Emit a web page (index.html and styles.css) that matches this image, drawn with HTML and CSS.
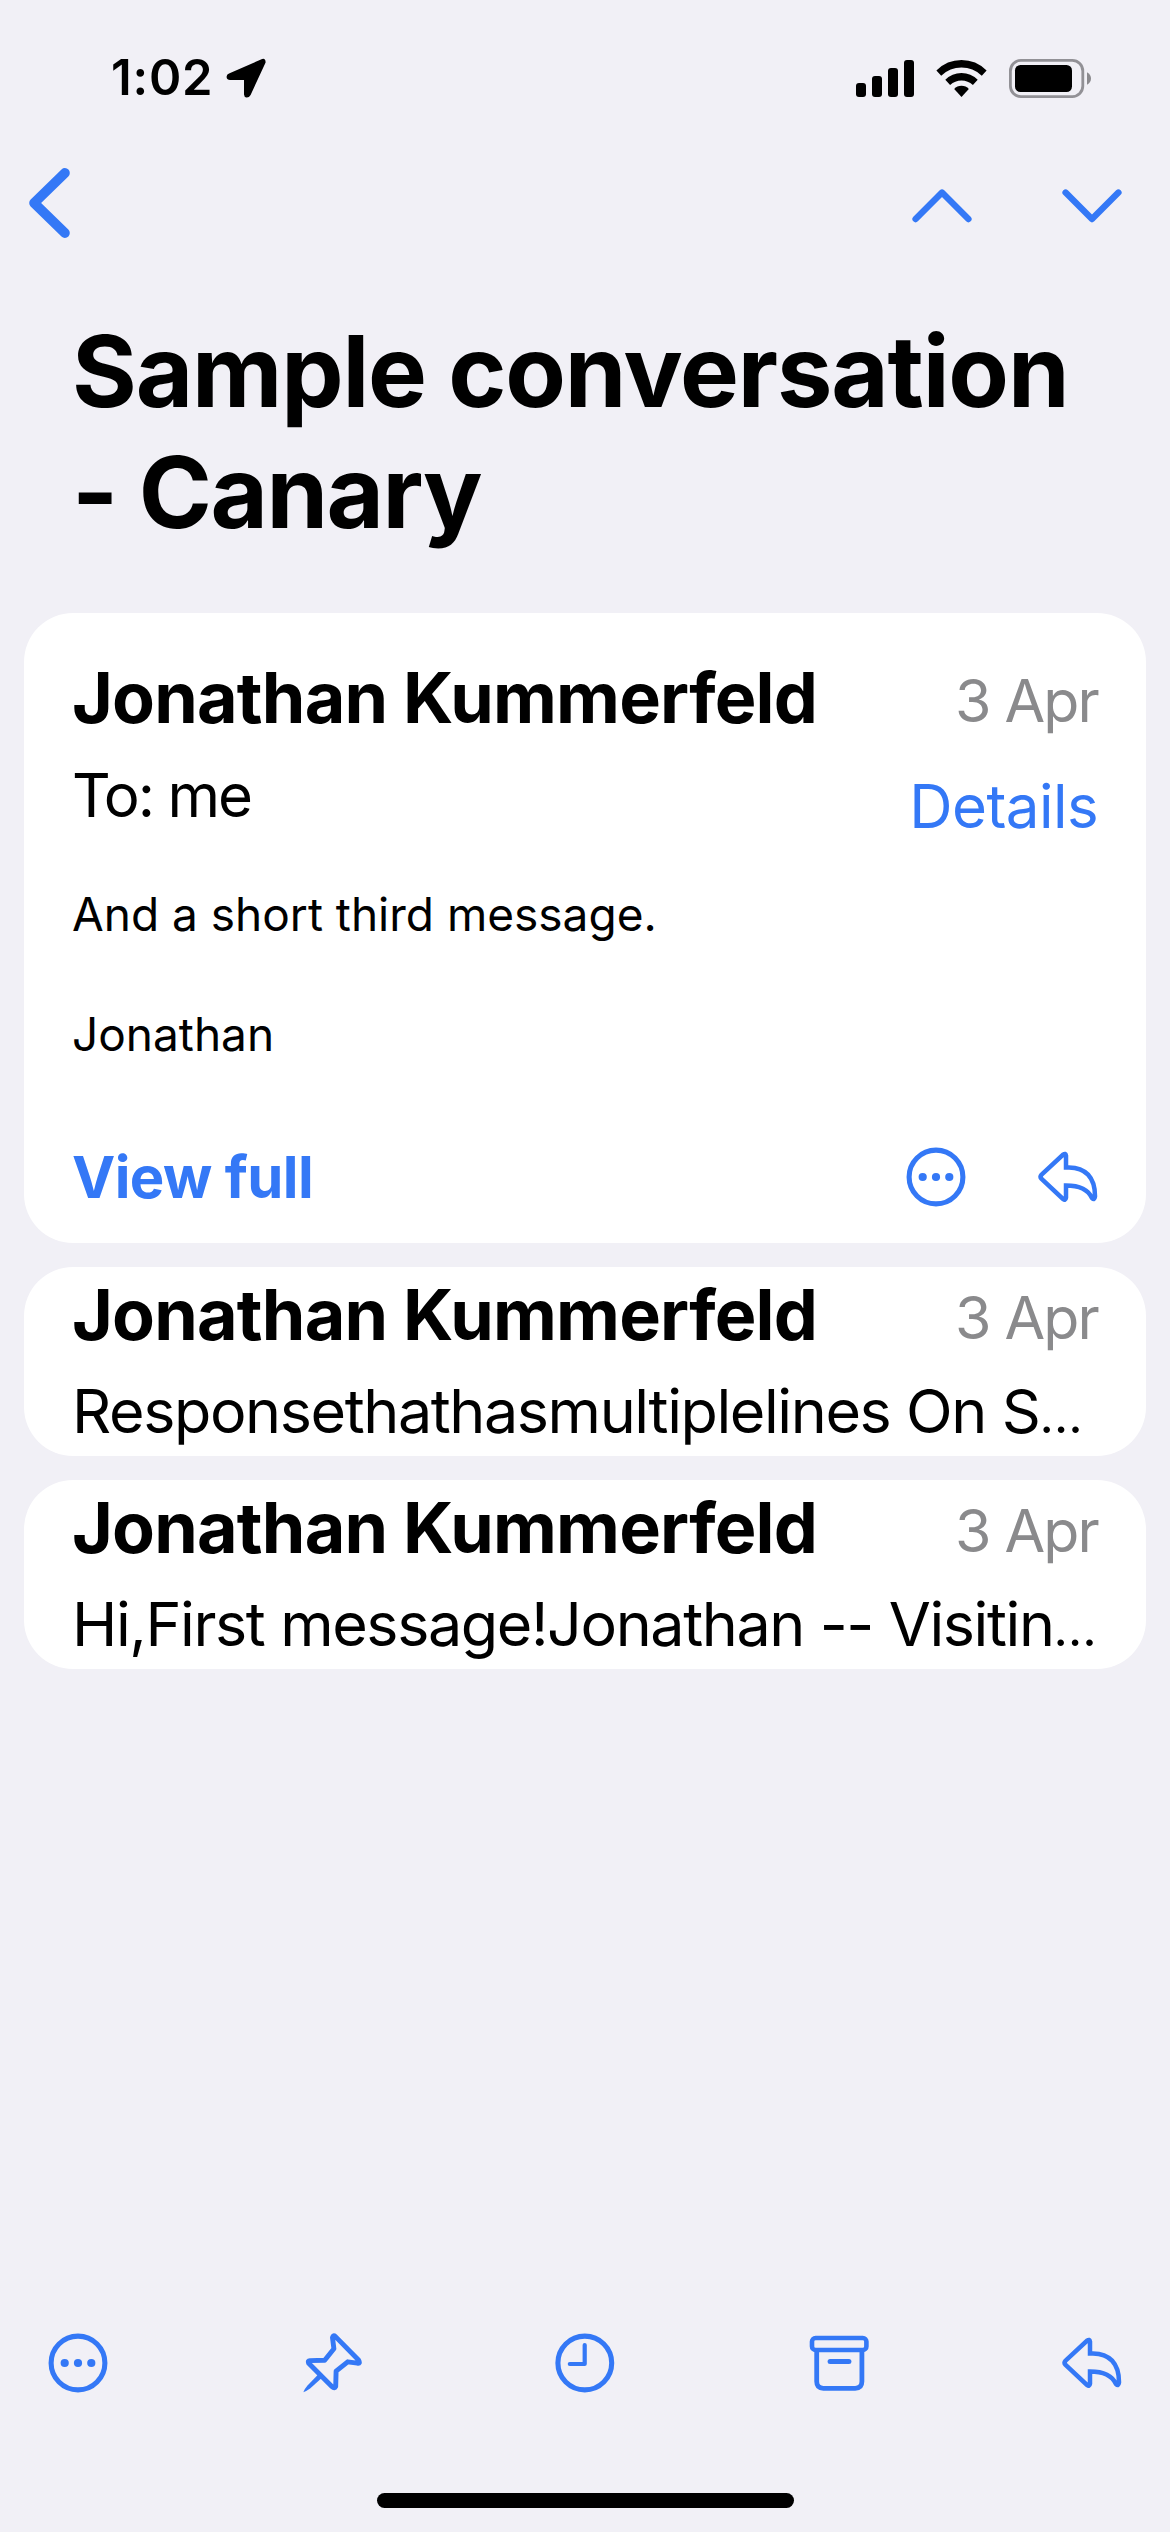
FILE: index.html
```html
<!DOCTYPE html>
<html lang="en">
<head>
<meta charset="utf-8">
<title>Sample conversation - Canary</title>
<link rel="stylesheet" href="styles.css">
</head>
<body>
<svg width="0" height="0" class="sprite" aria-hidden="true">
  <symbol id="more" viewBox="0 0 60 60">
    <circle cx="30" cy="30" r="26.9" fill="none" stroke="currentColor" stroke-width="5.1"/>
    <circle cx="16.7" cy="30" r="4.1" fill="currentColor"/>
    <circle cx="30" cy="30" r="4.1" fill="currentColor"/>
    <circle cx="43.3" cy="30" r="4.1" fill="currentColor"/>
  </symbol>
  <symbol id="reply" viewBox="0 0 60 60">
    <path d="M3.6 27.6 L25.2 7.6 Q27.6 5.8 28 8.6 V20.4 H31 C47 20.4 57.2 30 57 49.6 Q56.6 53.4 54 51 C50 42 42 38.4 28 38.4 V50.8 Q27.6 54 25 52 L3.6 32 Q1.5 29.8 3.6 27.6 Z" fill="none" stroke="currentColor" stroke-width="4.5"/>
  </symbol>
</svg>
<div class="screen">
  <header class="status">
    <div class="clock">
      <span>1:02</span>
      <svg width="40" height="40" viewBox="0 0 40 40"><path d="M35.5 1.2 Q39.6 -0.2 39.6 4.4 L24.6 37 Q23 39.8 20.6 39.6 Q18.2 39.2 18 36.4 V22 H4 Q1 21.8 .6 19.2 Q.4 16.8 3 15.6 Z"/></svg>
    </div>
    <div class="indicators">
      <svg width="58" height="37" viewBox="0 0 58 37"><rect y="23" width="10" height="14" rx="3"/><rect x="16" y="16" width="10" height="21" rx="3"/><rect x="32" y="8" width="10" height="29" rx="3"/><rect x="48" width="10" height="37" rx="3"/></svg>
      <svg width="51" height="37" viewBox="0 0 51 37"><path d="M.4 10.4 Q11 0 25.5 0 Q40 0 50.6 10.4 L45.8 15.7 Q37 7.6 25.5 7.6 Q14 7.6 5.2 15.7 Z"/><path d="M9.3 19.8 Q16 13 25.5 13 Q35 13 41.7 19.8 L36.9 24.9 Q32 20.4 25.5 20.4 Q19 20.4 14.1 24.9 Z"/><path d="M18.2 29 Q21 25.8 25.5 25.8 Q30 25.8 32.8 29 L25.5 37 Z"/></svg>
      <svg width="82" height="39" viewBox="0 0 82 39"><rect x="1.4" y="1.4" width="72.4" height="36.2" rx="10.5" fill="none" stroke="#929196" stroke-width="2.8"/><rect x="6" y="6" width="57" height="27" rx="5.5"/><path d="M78 13.2 Q82 15.5 82 19.5 Q82 23.5 78 25.8 Z" fill="#8b8a8e"/></svg>
    </div>
  </header>

  <nav class="nav">
    <svg width="41" height="70" viewBox="0 0 41 70"><path d="M35.9 4.9 L5.1 35 L35.9 65.1" class="back"/></svg>
    <div class="pager">
      <svg width="60" height="34" viewBox="0 0 60 34"><path d="M3.6 30 L30 3.6 L56.4 30" class="step"/></svg>
      <svg width="60" height="34" viewBox="0 0 60 34"><path d="M3.6 3.6 L30 30 L56.4 3.6" class="step"/></svg>
    </div>
  </nav>

  <h1 class="subject">Sample conversation <span class="tail">- Canary</span></h1>

  <main class="thread">
    <article class="card open">
      <div class="head"><h2>Jonathan Kummerfeld</h2><time>3 Apr</time></div>
      <div class="recipients"><span class="to">To: me</span><a class="details">Details</a></div>
      <div class="body"><p>And a short third message.</p><p>Jonathan</p></div>
      <div class="actions">
        <a class="full">View full</a>
        <svg class="icon"><use href="#more"/></svg>
        <svg class="icon"><use href="#reply"/></svg>
      </div>
    </article>
    <article class="card folded">
      <div class="head"><h2>Jonathan Kummerfeld</h2><time>3 Apr</time></div>
      <p class="preview">Responsethathasmultiplelines On S<span class="dots">…</span></p>
    </article>
    <article class="card folded">
      <div class="head"><h2>Jonathan Kummerfeld</h2><time>3 Apr</time></div>
      <p class="preview">Hi,First message!Jonathan -- Visitin<span class="dots">…</span></p>
    </article>
  </main>

  <footer class="toolbar">
    <svg class="icon"><use href="#more"/></svg>
    <svg class="icon" viewBox="0 0 60 60"><g transform="translate(.5 0)"><path d="M33 3.6 L56 27 Q58.2 31 54.8 30.2 L45.2 28.8 L33.6 38.2 L33.2 53.4 Q32 56 29.6 53.8 L6.2 30.2 Q5 27.4 7.6 27.6 L22.2 27.2 L31.4 15.8 L30 4.6 Q30.6 1.6 33 3.6 Z" fill="none" stroke="currentColor" stroke-width="4.9" stroke-linejoin="round"/><path d="M16.4 40.8 L5 52.4 Q1.6 56.4 .8 59.2 Q3.8 58.4 7.6 55.6 L19.8 44.4 Z" fill="currentColor"/></g></svg>
    <svg class="icon" viewBox="0 0 60 60"><circle cx="29.8" cy="30" r="26.9" fill="none" stroke="currentColor" stroke-width="5.1"/><path d="M29.7 12 V31 H14.8" fill="none" stroke="currentColor" stroke-width="4.2" stroke-linecap="round" stroke-linejoin="round"/></svg>
    <svg class="icon" viewBox="0 0 60 60"><g fill="none" stroke="currentColor"><rect x="3" y="5" width="54.4" height="12" rx="3.6" stroke-width="4.6"/><path d="M7.7 18 V48.6 Q7.7 55.3 14.4 55.3 H46.2 Q52.9 55.3 52.9 48.6 V18" stroke-width="4.8"/><path d="M21.1 28.5 H39.9" stroke-width="5" stroke-linecap="round"/></g></svg>
    <svg class="icon"><use href="#reply"/></svg>
  </footer>
  <div class="home"></div>
</div>
</body>
</html>
```
FILE: styles.css
```css
* { box-sizing: border-box; margin: 0; padding: 0; }
html, body { background: #f1f0f6; }
body { font-family: Inter, "Liberation Sans", sans-serif; color: #000; }
svg { display: block; flex: none; }
.sprite { position: absolute; }

.screen { width: 1170px; height: 2532px; display: flex; flex-direction: column; overflow: hidden; }

.status { height: 156px; padding: 0 79px 0 111px; display: flex; align-items: center; justify-content: space-between; }
.clock { display: flex; align-items: center; gap: 13px; font-size: 49px; font-weight: 600; line-height: 60px; letter-spacing: .78px; }
.indicators { display: flex; align-items: center; gap: 22px; }

.nav { height: 94px; padding: 0 48px 0 29px; display: flex; align-items: center; justify-content: space-between; }
.pager { display: flex; gap: 90px; padding-top: 6px; }
.back, .step { fill: none; stroke: #3478f6; stroke-linecap: round; stroke-linejoin: round; }
.back { stroke-width: 9.8px; }
.step { stroke-width: 6.4px; }

.subject { height: 302.5px; margin: 60.5px 72px 0; font-size: 99px; font-weight: 700; line-height: 121px; letter-spacing: -1.16px; }
.tail { letter-spacing: -1.5px; white-space: nowrap; }

.thread { flex: 1; padding: 0 24px; display: flex; flex-direction: column; gap: 24px; }
.card { background: #fff; border-radius: 49px; padding: 0 48px; }
.open { height: 630px; padding-top: 42px; }
.folded { height: 189px; padding-top: 5px; }

.head { height: 85px; display: flex; justify-content: space-between; align-items: baseline; line-height: 85px; }
h2 { font-size: 70px; font-weight: 700; letter-spacing: -.8px; }
time { font-size: 59px; letter-spacing: -1.84px; color: #8a8a8c; transform: translateY(-1px); }

.recipients { height: 83px; margin-top: 19px; display: flex; justify-content: space-between; font-size: 60px; line-height: 72px; }
.to { letter-spacing: -2.17px; }
.details { align-self: flex-end; letter-spacing: -.55px; color: #3478f6; }

.body { margin-top: 42px; display: flex; flex-direction: column; gap: 60px; font-size: 46px; line-height: 60px; }

.actions { height: 60px; margin-top: 83px; display: flex; align-items: center; gap: 72px; color: #3478f6; }
.full { flex: 1; font-size: 58px; font-weight: 700; line-height: 60px; letter-spacing: -.6px; }
.icon { width: 60px; height: 60px; }

.preview { margin-top: 18px; font-size: 61px; line-height: 72px; letter-spacing: -1.4px; white-space: nowrap; }
.dots { font-size: 50px; line-height: 1; }

.toolbar { height: 60px; padding: 0 48px; display: flex; justify-content: space-between; color: #3478f6; }
.home { width: 417px; height: 15px; margin: 100px 0 24px 377px; border-radius: 8px; background: #000; flex: none; }
```
